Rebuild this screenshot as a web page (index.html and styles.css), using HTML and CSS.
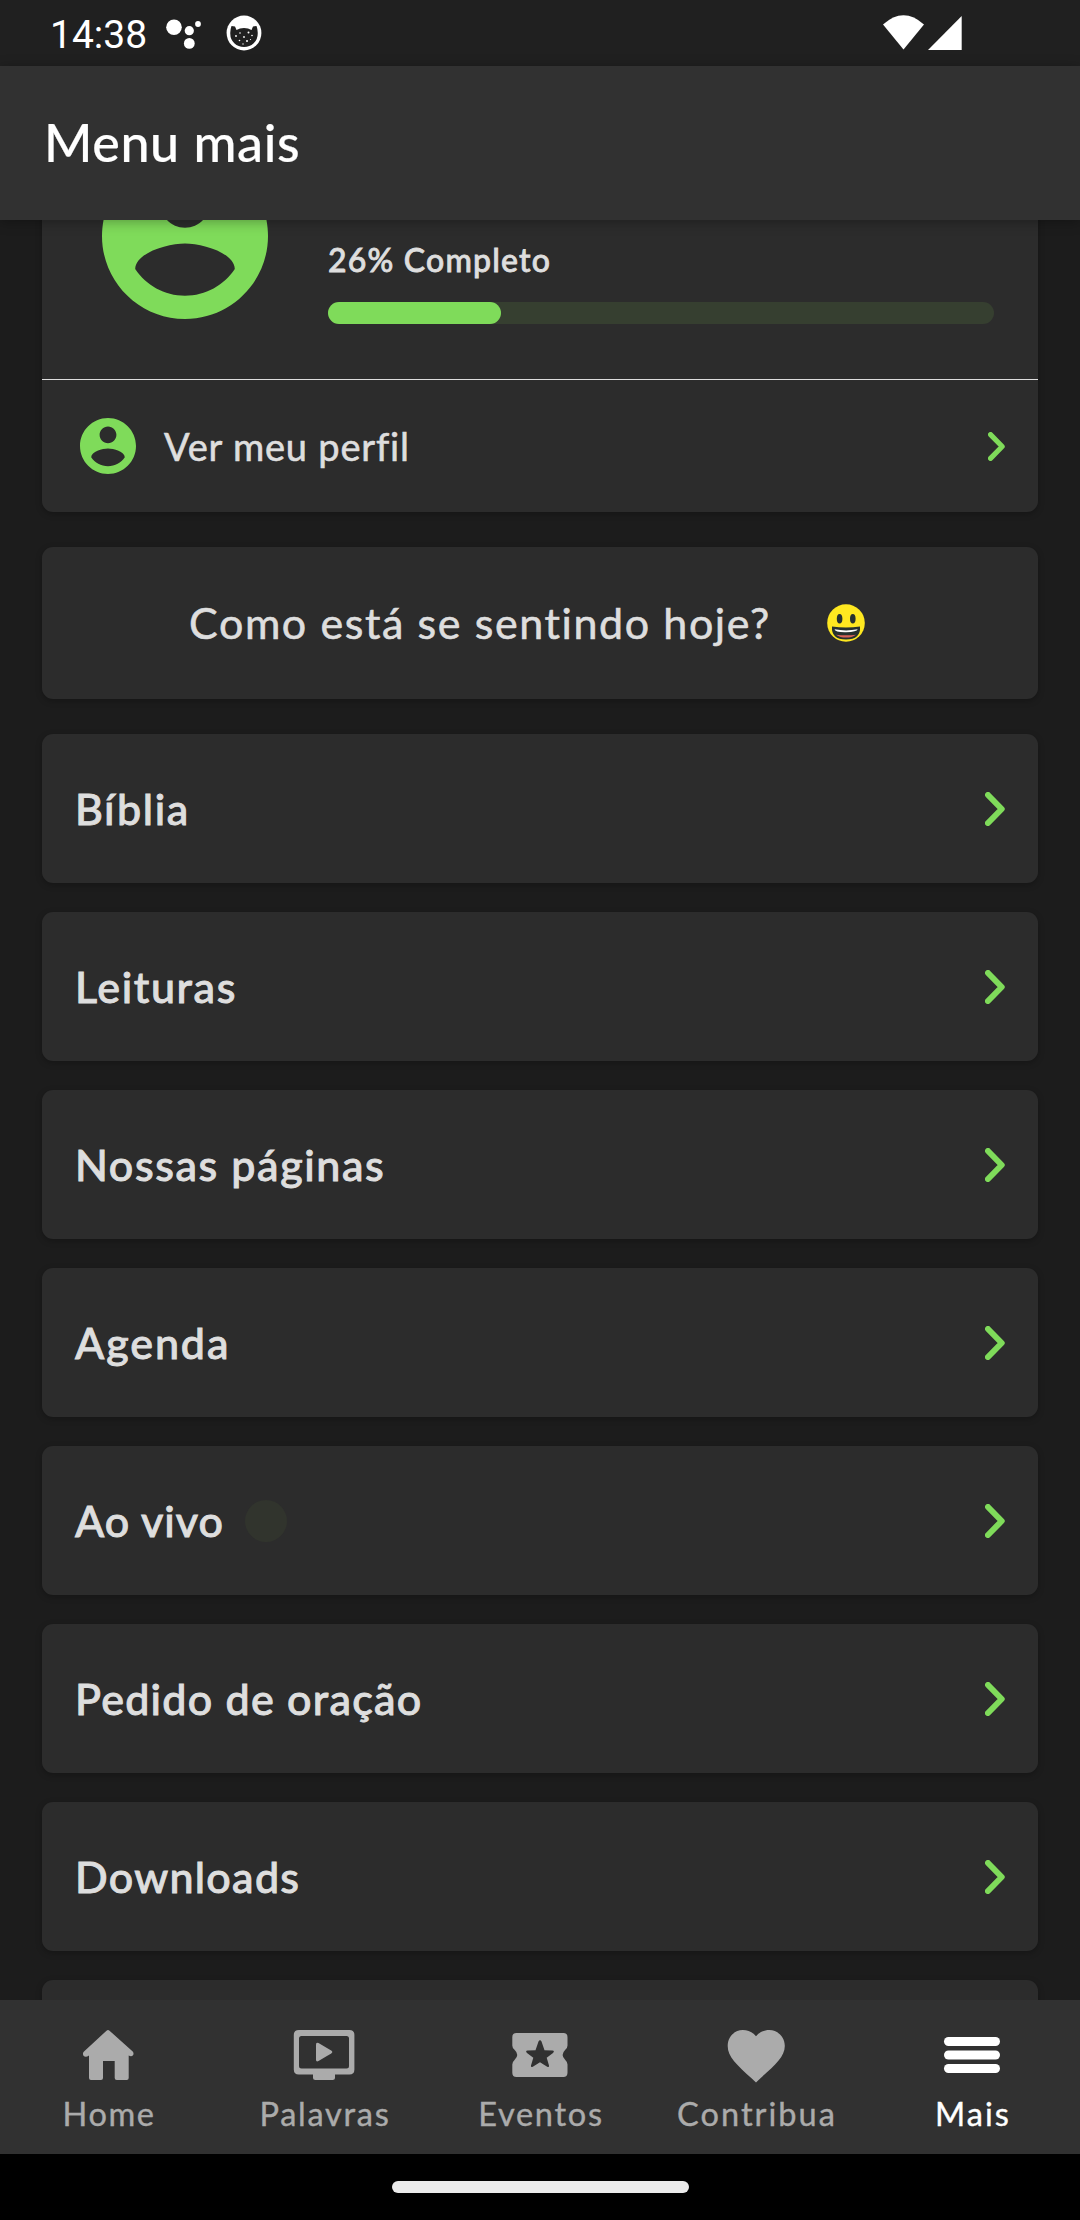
FILE: index.html
```html
<!DOCTYPE html>
<html lang="pt-BR">
<head>
<meta charset="utf-8">
<title>Menu mais</title>
<link rel="stylesheet" href="styles.css">
</head>
<body>
<svg class="defs" width="0" height="0" aria-hidden="true">
  <symbol id="account" viewBox="2 2 20 20"><path d="M12 2C6.48 2 2 6.48 2 12s4.48 10 10 10 10-4.48 10-10S17.52 2 12 2zm0 3c1.66 0 3 1.34 3 3s-1.34 3-3 3-3-1.34-3-3 1.34-3 3-3zm0 14.2c-2.5 0-4.71-1.28-6-3.22.03-1.99 4-3.08 6-3.08 1.99 0 5.97 1.09 6 3.08-1.29 1.94-3.5 3.22-6 3.22z"/></symbol>
  <symbol id="chevron" viewBox="0 0 20 34"><path d="M3 3l13.700 14L3 31" fill="none" stroke="currentColor" stroke-width="6" stroke-linecap="round" stroke-linejoin="round"/></symbol>
</svg>

<div class="phone">
  <header class="status">
    <span class="clock">14:38</span>
    <svg class="assistant" width="36" height="36" viewBox="166 15 36 36" fill="#fff"><circle cx="174" cy="27.3" r="7.8"/><circle cx="189.3" cy="30.7" r="4.6"/><circle cx="198" cy="24" r="2.9"/><circle cx="189.3" cy="43.4" r="5.4"/></svg>
    <svg class="cat" width="36" height="36" viewBox="0 0 36 36"><circle cx="18" cy="18" r="17.4" fill="#fff"/><path d="M5.500 11l3.500.5 1.500 3.500 3.500-1.500q4-.8 8 0l3.500 1.500 1.500-3.500 3.500-.5q1.500 4 1.200 8a13.700 13 0 0 1-27.400 0q-.3-4 1.200-8z" fill="#202020"/><g fill="#fff"><circle cx="10" cy="21" r=".9"/><circle cx="14" cy="18" r=".8"/><circle cx="22.500" cy="17.500" r="1"/><circle cx="26" cy="20.500" r=".8"/><circle cx="18" cy="22" r=".9"/><circle cx="13.500" cy="25.500" r=".8"/><circle cx="21" cy="26" r="1"/><circle cx="17" cy="29" r=".7"/><circle cx="24.500" cy="24.500" r=".6"/></g></svg>
    <svg class="signals" width="80" height="36" viewBox="883 15 80 36" fill="#fff"><path d="M883 24.500Q903.500 6 924 24.500L903.500 49.500z"/><path d="M928 50L961.700 16V50z"/></svg>
  </header>

  <div class="appbar"><h1>Menu mais</h1></div>

  <main class="scroll">
    <section class="card profile">
      <div class="summary">
        <svg class="avatar"><use href="#account"/></svg>
        <div class="progress">
          <span class="percent">26% Completo</span>
          <div class="track"><div class="fill" style="width:26%"></div></div>
        </div>
      </div>
      <a class="view">
        <svg class="person"><use href="#account"/></svg>
        <span class="viewtext">Ver meu perfil</span>
        <svg class="chev small"><use href="#chevron"/></svg>
      </a>
    </section>

    <section class="card mood">
      <span class="question">Como está se sentindo hoje?</span>
      <svg class="smile" width="38" height="38" viewBox="0 0 38 38"><circle cx="19" cy="19" r="18.800" fill="#fee820"/><ellipse cx="12.600" cy="14.800" rx="2.800" ry="4.700" fill="#26312f"/><ellipse cx="25.800" cy="14.800" rx="2.800" ry="4.700" fill="#26312f"/><path d="M5 22.500Q19 24.500 33 22.500Q34 35.500 19 35.500T5 22.500z" fill="#26312f"/><path d="M7.500 25.300Q19 27.500 30.700 25.300Q30 28 19 28.200T7.500 25.300z" fill="#fff"/><path d="M9 30.700Q19 31.800 29 30.700Q25 33.600 19 33.600T9 30.700z" fill="#d8635a"/></svg>
    </section>

    <nav class="list">
      <a class="card row"><span>Bíblia</span><svg class="chev"><use href="#chevron"/></svg></a>
      <a class="card row"><span>Leituras</span><svg class="chev"><use href="#chevron"/></svg></a>
      <a class="card row"><span>Nossas páginas</span><svg class="chev"><use href="#chevron"/></svg></a>
      <a class="card row agenda"><span>Agenda</span><svg class="chev"><use href="#chevron"/></svg></a>
      <a class="card row live"><span>Ao vivo</span><i class="dot"></i><svg class="chev"><use href="#chevron"/></svg></a>
      <a class="card row prayer"><span>Pedido de oração</span><svg class="chev"><use href="#chevron"/></svg></a>
      <a class="card row downloads"><span>Downloads</span><svg class="chev"><use href="#chevron"/></svg></a>
      <a class="card row"></a>
    </nav>
  </main>

  <nav class="tabs">
    <a class="tab"><svg viewBox="0 0 64 64"><path d="M30.500 7.700Q32 6.300 33.500 7.700L56.700 28.500Q58.200 30.500 57 32.300Q55.300 34 52.700 32.500V55q0 2-2 2H40.700q-2 0-2-2V38H27V55q0 2-2 2H15q-2 0-2-2V32.500Q9.500 34.800 7.500 32.700Q6.200 30.300 8 28.500z"/></svg><span>Home</span></a>
    <a class="tab"><svg viewBox="0 0 64 64"><path fill-rule="evenodd" d="M6.800 7H57.400q5 0 5 5V46.500q0 5-5 5H43V54.500q0 2.500-2.500 2.500H23.500q-2.500 0-2.500-2.500V51.500H6.800q-5 0-5-5V12q0-5 5-5zM9.500 13q-2.500 0-2.500 2.500V43q0 2.500 2.500 2.500H54.500q2.500 0 2.500-2.500V15.500q0-2.500-2.500-2.500z"/><path d="M24 21.500q0-2.800 2.500-1.400L39.200 27.500q2.200 1.500 0 3L26.500 38q-2.500 1.300-2.500-1.500z"/></svg><span class="wide">Palavras</span></a>
    <a class="tab"><svg viewBox="0 0 64 64"><path fill-rule="evenodd" d="M8.500 10H55.300q4.200 0 4.200 4.200V22.500Q59.500 25 57.300 26.800Q52 32 57.300 37Q59.500 39 59.500 41.500V49.800q0 4.200-4.200 4.200H8.500q-4.200 0-4.200-4.200V41.500Q4.300 39 6.500 37Q12 32 6.500 26.800Q4.300 25 4.300 22.500V14.200Q4.300 10 8.500 10zM32 17.300q-1 0-1.500 1.300L27.500 27.200 19.500 27.500q-2.500.5-.5 2.500L25.300 34.800 23 42.500q-.3 2.200 1.800 1.200L32 39.200 39.200 43.700q2.100 1 1.800-1.200L38.700 34.800 45 30q2-2-.5-2.500L36.500 27.200 33.500 18.600Q33 17.300 32 17.300z"/></svg><span class="wide">Eventos</span></a>
    <a class="tab"><svg viewBox="0 0 64 64"><path d="M32 59.500L27.800 55.500C12.800 41.900 3.700 33.700 3.700 23 3.700 14 10.200 7 18.800 7 23.900 7 28.800 9.300 32 13.200 35.200 9.300 40.100 7 45.200 7 53.800 7 60.800 14 60.800 23 60.800 33.700 51.200 41.900 36.200 55.500z"/></svg><span class="wider">Contribua</span></a>
    <a class="tab active"><svg viewBox="0 0 64 64"><rect x="4" y="14" width="56" height="9" rx="4.500"/><rect x="4" y="27.500" width="56" height="9" rx="4.500"/><rect x="4" y="41" width="56" height="9" rx="4.500"/></svg><span class="wider">Mais</span></a>
  </nav>
  <footer class="gesture"><div class="pill"></div></footer>
</div>
</body>
</html>
```
FILE: styles.css
```css
* { box-sizing: border-box; }
body { margin: 0; background: #1c1c1c; font-family: Lato, "Open Sans", sans-serif; }
.defs { display: block; }
.phone { width: 1080px; height: 2220px; display: flex; flex-direction: column; overflow: hidden; background: #1c1c1c; color: #dedede; }

.status { flex: none; height: 66px; padding: 0 117px 0 50px; background: #202020; display: flex; align-items: center; }
.clock { font: 400 39px/46px Roboto, sans-serif; letter-spacing: 0; color: #fff; padding-top: 4px; width: 116px; }
.cat { margin-left: 24px; }
.signals { margin-left: auto; }

.appbar { flex: none; height: 154px; padding: 0 44px 2px; background: #313131; display: flex; align-items: center; z-index: 1; box-shadow: 0 2px 12px rgba(0, 0, 0, .3); }
h1 { margin: 0; font-size: 52px; font-weight: 500; line-height: 62px; letter-spacing: .6px; color: #fff; -webkit-text-stroke: .2px #fff; }

.scroll { flex: 1; min-height: 0; overflow: hidden; padding: 0 42px; }
.card { background: #2c2c2c; border-radius: 11px; box-shadow: 0 2px 6px rgba(0, 0, 0, .25); }
.profile { margin-top: -103px; height: 395px; }
.summary { height: 263px; border-bottom: 1px solid #dedede; padding: 36px 44px 0 60px; display: flex; }
.avatar { flex: none; width: 166px; height: 166px; fill: #7fdb5a; }
.progress { flex: 1; margin-left: 60px; padding-top: 87px; display: flex; flex-direction: column; gap: 22px; }
.percent { font-size: 32px; font-weight: 500; line-height: 40px; letter-spacing: 1.200px; -webkit-text-stroke: .8px; white-space: nowrap; }
.track { height: 22px; border-radius: 11px; background: #363f30; }
.fill { height: 22px; border-radius: 11px; background: #7fdb5a; }
.view { height: 132px; padding: 0 33px 0 38px; display: flex; align-items: center; }
.person { width: 56px; height: 56px; fill: #7fdb5a; }
.viewtext { margin-left: 28px; font-size: 38px; line-height: 46px; letter-spacing: .8px; padding-bottom: 1px; -webkit-text-stroke: .6px; }
.chev { width: 20px; height: 34px; margin-left: auto; color: #7fdb5a; }
.chev.small { width: 17px; height: 29px; }

.mood { margin-top: 35px; height: 152px; padding-left: 147px; display: flex; align-items: center; }
.question { width: 638px; font-size: 43px; line-height: 52px; letter-spacing: 1.600px; -webkit-text-stroke: .6px; white-space: nowrap; }

.list { margin-top: 35px; display: flex; flex-direction: column; gap: 29px; }
.row { flex: none; height: 149px; padding: 0 33px; display: flex; align-items: center; font-size: 43px; font-weight: 500; line-height: 52px; letter-spacing: 1.600px; -webkit-text-stroke: .9px; }
.agenda { letter-spacing: 1.900px; }
.live { letter-spacing: 1px; }
.prayer { letter-spacing: 1.250px; }
.downloads { letter-spacing: 1.300px; }
.dot { width: 42px; height: 42px; margin-left: 21px; border-radius: 50%; background: #31342d; }

.tabs { flex: none; height: 154px; background: #313131; display: grid; grid-template-columns: repeat(5, 1fr); }
.tab { display: flex; flex-direction: column; align-items: center; gap: 7px; padding-top: 23px; color: #ababab; fill: #ababab; font-size: 32.500px; line-height: 40px; letter-spacing: 1.600px; -webkit-text-stroke: .4px; }
.tab svg { width: 64px; height: 64px; -webkit-text-stroke: 0; }
.tab span { padding-left: 2px; }
.wide { letter-spacing: 1.750px; }
.wider { letter-spacing: 2.050px; }
.active { color: #fff; fill: #fff; }

.gesture { flex: none; height: 66px; background: #000; display: flex; justify-content: center; padding-top: 27px; }
.pill { width: 297px; height: 12px; border-radius: 6px; background: #ebebeb; }
```
